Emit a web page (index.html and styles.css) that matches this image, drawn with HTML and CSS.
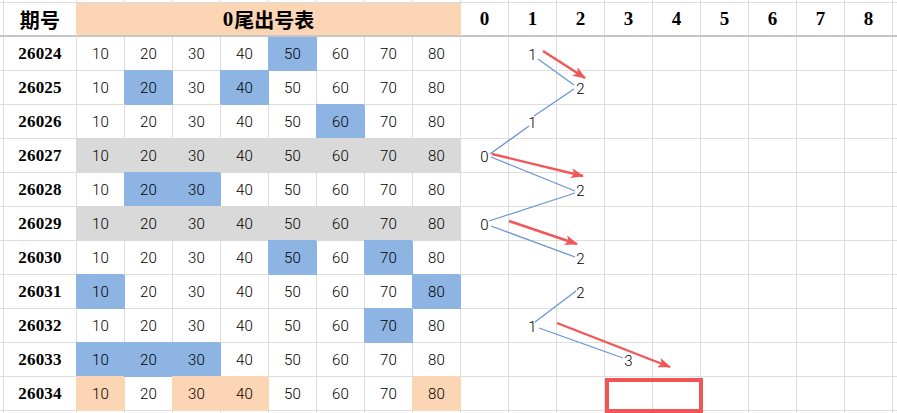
FILE: index.html
```html
<!DOCTYPE html>
<html lang="zh">
<head>
<meta charset="utf-8">
<title>0尾出号表</title>
<link rel="stylesheet" href="styles.css">
</head>
<body>
<div class="sheet">
  <div class="row top">
    <div class="c lead"></div><div class="c per"></div>
    <div class="c n"></div><div class="c n"></div><div class="c n"></div><div class="c n"></div><div class="c n"></div><div class="c n"></div><div class="c n"></div><div class="c n"></div>
    <div class="c k"></div><div class="c k"></div><div class="c k"></div><div class="c k"></div><div class="c k"></div><div class="c k"></div><div class="c k"></div><div class="c k"></div><div class="c k"></div><div class="c tail"></div>
  </div>
  <div class="row head">
    <div class="c lead"></div><div class="c per hd">期号</div>
    <div class="c title"><span class="zero">0</span>尾出号表</div>
    <div class="c k hk">0</div><div class="c k hk">1</div><div class="c k hk">2</div><div class="c k hk">3</div><div class="c k hk">4</div><div class="c k hk">5</div><div class="c k hk">6</div><div class="c k hk">7</div><div class="c k hk">8</div><div class="c tail"></div>
  </div>

  <div class="row r1">
    <div class="c lead"></div><div class="c per">26024</div>
    <div class="c n">10</div><div class="c n">20</div><div class="c n">30</div><div class="c n">40</div><div class="c n b">50</div><div class="c n">60</div><div class="c n">70</div><div class="c n">80</div>
    <div class="c k"></div><div class="c k v">1</div><div class="c k"></div><div class="c k"></div><div class="c k"></div><div class="c k"></div><div class="c k"></div><div class="c k"></div><div class="c k"></div><div class="c tail"></div>
  </div>
  <div class="row">
    <div class="c lead"></div><div class="c per">26025</div>
    <div class="c n">10</div><div class="c n b">20</div><div class="c n">30</div><div class="c n b">40</div><div class="c n">50</div><div class="c n">60</div><div class="c n">70</div><div class="c n">80</div>
    <div class="c k"></div><div class="c k"></div><div class="c k v">2</div><div class="c k"></div><div class="c k"></div><div class="c k"></div><div class="c k"></div><div class="c k"></div><div class="c k"></div><div class="c tail"></div>
  </div>
  <div class="row">
    <div class="c lead"></div><div class="c per">26026</div>
    <div class="c n">10</div><div class="c n">20</div><div class="c n">30</div><div class="c n">40</div><div class="c n">50</div><div class="c n b">60</div><div class="c n">70</div><div class="c n">80</div>
    <div class="c k"></div><div class="c k v">1</div><div class="c k"></div><div class="c k"></div><div class="c k"></div><div class="c k"></div><div class="c k"></div><div class="c k"></div><div class="c k"></div><div class="c tail"></div>
  </div>
  <div class="row">
    <div class="c lead"></div><div class="c per">26027</div>
    <div class="c n g">10</div><div class="c n g">20</div><div class="c n g">30</div><div class="c n g">40</div><div class="c n g">50</div><div class="c n g">60</div><div class="c n g">70</div><div class="c n g">80</div>
    <div class="c k v">0</div><div class="c k"></div><div class="c k"></div><div class="c k"></div><div class="c k"></div><div class="c k"></div><div class="c k"></div><div class="c k"></div><div class="c k"></div><div class="c tail"></div>
  </div>
  <div class="row">
    <div class="c lead"></div><div class="c per">26028</div>
    <div class="c n">10</div><div class="c n b">20</div><div class="c n b">30</div><div class="c n">40</div><div class="c n">50</div><div class="c n">60</div><div class="c n">70</div><div class="c n">80</div>
    <div class="c k"></div><div class="c k"></div><div class="c k v">2</div><div class="c k"></div><div class="c k"></div><div class="c k"></div><div class="c k"></div><div class="c k"></div><div class="c k"></div><div class="c tail"></div>
  </div>
  <div class="row">
    <div class="c lead"></div><div class="c per">26029</div>
    <div class="c n g">10</div><div class="c n g">20</div><div class="c n g">30</div><div class="c n g">40</div><div class="c n g">50</div><div class="c n g">60</div><div class="c n g">70</div><div class="c n g">80</div>
    <div class="c k v">0</div><div class="c k"></div><div class="c k"></div><div class="c k"></div><div class="c k"></div><div class="c k"></div><div class="c k"></div><div class="c k"></div><div class="c k"></div><div class="c tail"></div>
  </div>
  <div class="row">
    <div class="c lead"></div><div class="c per">26030</div>
    <div class="c n">10</div><div class="c n">20</div><div class="c n">30</div><div class="c n">40</div><div class="c n b">50</div><div class="c n">60</div><div class="c n b">70</div><div class="c n">80</div>
    <div class="c k"></div><div class="c k"></div><div class="c k v">2</div><div class="c k"></div><div class="c k"></div><div class="c k"></div><div class="c k"></div><div class="c k"></div><div class="c k"></div><div class="c tail"></div>
  </div>
  <div class="row">
    <div class="c lead"></div><div class="c per">26031</div>
    <div class="c n b">10</div><div class="c n">20</div><div class="c n">30</div><div class="c n">40</div><div class="c n">50</div><div class="c n">60</div><div class="c n">70</div><div class="c n b">80</div>
    <div class="c k"></div><div class="c k"></div><div class="c k v">2</div><div class="c k"></div><div class="c k"></div><div class="c k"></div><div class="c k"></div><div class="c k"></div><div class="c k"></div><div class="c tail"></div>
  </div>
  <div class="row">
    <div class="c lead"></div><div class="c per">26032</div>
    <div class="c n">10</div><div class="c n">20</div><div class="c n">30</div><div class="c n">40</div><div class="c n">50</div><div class="c n">60</div><div class="c n b">70</div><div class="c n">80</div>
    <div class="c k"></div><div class="c k v">1</div><div class="c k"></div><div class="c k"></div><div class="c k"></div><div class="c k"></div><div class="c k"></div><div class="c k"></div><div class="c k"></div><div class="c tail"></div>
  </div>
  <div class="row">
    <div class="c lead"></div><div class="c per">26033</div>
    <div class="c n b">10</div><div class="c n b">20</div><div class="c n b">30</div><div class="c n">40</div><div class="c n">50</div><div class="c n">60</div><div class="c n">70</div><div class="c n">80</div>
    <div class="c k"></div><div class="c k"></div><div class="c k"></div><div class="c k v">3</div><div class="c k"></div><div class="c k"></div><div class="c k"></div><div class="c k"></div><div class="c k"></div><div class="c tail"></div>
  </div>
  <div class="row">
    <div class="c lead"></div><div class="c per">26034</div>
    <div class="c n o">10</div><div class="c n">20</div><div class="c n o">30</div><div class="c n o">40</div><div class="c n">50</div><div class="c n">60</div><div class="c n">70</div><div class="c n o">80</div>
    <div class="c k"></div><div class="c k"></div><div class="c k"></div><div class="c k"></div><div class="c k"></div><div class="c k"></div><div class="c k"></div><div class="c k"></div><div class="c k"></div><div class="c tail"></div>
  </div>
  <div class="row foot">
    <div class="c lead"></div><div class="c per"></div>
    <div class="c n"></div><div class="c n"></div><div class="c n"></div><div class="c n"></div><div class="c n"></div><div class="c n"></div><div class="c n"></div><div class="c n"></div>
    <div class="c k"></div><div class="c k"></div><div class="c k"></div><div class="c k"></div><div class="c k"></div><div class="c k"></div><div class="c k"></div><div class="c k"></div><div class="c k"></div><div class="c tail"></div>
  </div>

  <svg class="overlay" width="897" height="413" viewBox="0 0 897 413" xmlns="http://www.w3.org/2000/svg">
    <defs>
      <marker id="ah" viewBox="0 0 13 10" refX="12" refY="5" markerWidth="13" markerHeight="10" markerUnits="userSpaceOnUse" orient="auto">
        <path d="M0 0 L13 5 L0 10 L3 5 Z" fill="#f25757"/>
      </marker>
    </defs>
    <g class="trend">
      <line x1="538" y1="59" x2="574" y2="85"/>
      <line x1="574" y1="89" x2="534" y2="116"/>
      <line x1="529" y1="126" x2="490" y2="154"/>
      <line x1="491" y1="157" x2="575" y2="191"/>
      <line x1="575" y1="193" x2="489" y2="221"/>
      <line x1="491" y1="226" x2="575" y2="257"/>
      <line x1="576" y1="291" x2="535" y2="322"/>
      <line x1="539" y1="328" x2="623" y2="358"/>
    </g>
    <g class="arrows">
      <path d="M543 51 L585 78"/>
      <path d="M492 154 L583 176"/>
      <path d="M509 221 L577 244"/>
      <path d="M557 323 L670 367"/>
    </g>
  </svg>
  <div class="mark"></div>
</div>
</body>
</html>
```

FILE: styles.css
```css
html, body {
  margin: 0;
  padding: 0;
  background: #ffffff;
}

.sheet {
  position: relative;
  width: 897px;
  height: 413px;
  overflow: hidden;
  display: flex;
  flex-direction: column;
  color: #000;
}

.row {
  display: flex;
  height: 34px;
  flex: none;
}

.row.top {
  height: 3px;
}

.row.foot {
  height: 3px;
}

.c {
  box-sizing: border-box;
  flex: none;
  border-right: 1px solid #dddddd;
  border-bottom: 1px solid #dddddd;
  display: flex;
  align-items: center;
  justify-content: center;
  padding-top: 1px;
}

.top .c, .foot .c {
  padding-top: 0;
}

.lead {
  width: 4px;
}

.per {
  width: 73px;
  font-family: "Liberation Serif", serif;
  font-weight: bold;
  font-size: 17px;
  letter-spacing: 0.2px;
}

.n {
  width: 48px;
  font-family: "Roboto", "Liberation Sans", sans-serif;
  font-weight: 300;
  font-size: 15px;
  letter-spacing: 0.2px;
}

.k {
  width: 48px;
}

.tail {
  flex: 1;
  border-right: none;
}

.head .c {
  border-bottom: 2px solid #c6c6c6;
  padding-top: 0;
}

.hd {
  font-family: "Noto Sans CJK SC", sans-serif;
  font-weight: bold;
  font-size: 20px;
}

.title {
  width: 384px;
  background: #fcd5b4;
  border-right-color: #fcd5b4;
  box-shadow: -1px 0 0 #fcd5b4;
  font-family: "Noto Sans CJK SC", sans-serif;
  font-weight: bold;
  font-size: 20px;
}

.zero {
  font-family: "Liberation Serif", serif;
  font-size: 21px;
  margin-right: 1px;
}

.hk {
  font-family: "Liberation Serif", serif;
  font-weight: bold;
  font-size: 19px;
}

.v {
  font-family: "Roboto", "Liberation Sans", sans-serif;
  font-weight: 300;
  font-size: 15px;
  padding-top: 3px;
}

.b {
  background: #8db4e2;
  border-color: #8db4e2;
  box-shadow: -1px -1px 0 #8db4e2;
}

.r1 .b {
  box-shadow: -1px 0 0 #8db4e2;
}

.g {
  background: #d9d9d9;
  border-color: #d9d9d9;
  box-shadow: -1px -1px 0 #d9d9d9;
}

.o {
  background: #fcd5b4;
  border-color: #fcd5b4;
  box-shadow: -1px -1px 0 #fcd5b4;
}

.overlay {
  position: absolute;
  left: 0;
  top: 0;
  pointer-events: none;
}

.trend line {
  stroke: #6b95d3;
  stroke-width: 1.3;
}

.arrows path {
  stroke: #f25757;
  stroke-width: 2.4;
  fill: none;
  marker-end: url(#ah);
}

.mark {
  position: absolute;
  left: 605px;
  top: 378px;
  width: 98px;
  height: 35px;
  box-sizing: border-box;
  border: 4px solid #f05454;
}
```
